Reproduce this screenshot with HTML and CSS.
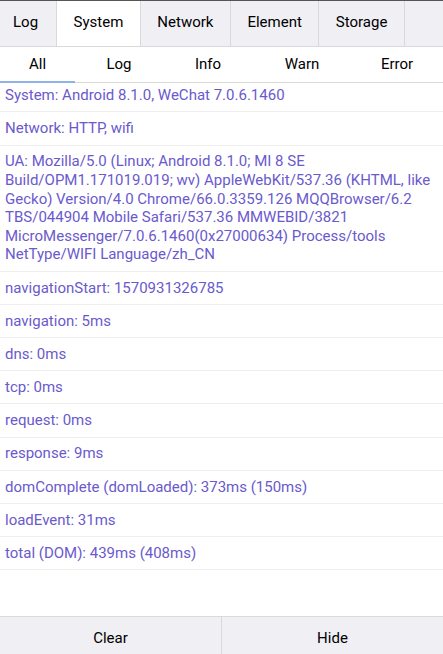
FILE: index.html
```html
<!DOCTYPE html>
<html>
<head>
<meta charset="utf-8">
<link rel="stylesheet" href="styles.css">
</head>
<body>
<div class="panel">
  <div class="tabbar">
    <div class="tab first">Log</div>
    <div class="tab active">System</div>
    <div class="tab">Network</div>
    <div class="tab">Element</div>
    <div class="tab">Storage</div>
  </div>
  <div class="subbar">
    <div class="sub active">All</div>
    <div class="sub">Log</div>
    <div class="sub">Info</div>
    <div class="sub">Warn</div>
    <div class="sub">Error</div>
  </div>
  <div class="content">
    <div class="row first">System: Android 8.1.0, WeChat 7.0.6.1460</div>
    <div class="row">Network: HTTP, wifi</div>
    <div class="row">UA: Mozilla/5.0 (Linux; Android 8.1.0; MI 8 SE Build/OPM1.171019.019; wv) AppleWebKit/537.36 (KHTML, like Gecko) Version/4.0 Chrome/66.0.3359.126 MQQBrowser/6.2 TBS/044904 Mobile Safari/537.36 MMWEBID/3821 MicroMessenger/7.0.6.1460(0x27000634) Process/tools NetType/WIFI Language/zh_CN</div>
    <div class="row">navigationStart: 1570931326785</div>
    <div class="row">navigation: 5ms</div>
    <div class="row">dns: 0ms</div>
    <div class="row">tcp: 0ms</div>
    <div class="row">request: 0ms</div>
    <div class="row">response: 9ms</div>
    <div class="row">domComplete (domLoaded): 373ms (150ms)</div>
    <div class="row">loadEvent: 31ms</div>
    <div class="row">total (DOM): 439ms (408ms)</div>
  </div>
  <div class="footer">
    <div class="btn">Clear</div>
    <div class="btn">Hide</div>
  </div>
</div>
</body>
</html>
```
FILE: styles.css
```css
html, body {
  margin: 0;
  padding: 0;
  height: 100%;
}
body {
  font-family: Roboto, "Liberation Sans", Arial, sans-serif;
  background: #ffffff;
  color: #000;
}
.panel {
  display: flex;
  flex-direction: column;
  height: 654px;
  border-top: 1px solid #555;
  box-sizing: border-box;
}
.tabbar {
  display: flex;
  height: 45px;
  background: #efeff4;
  border-bottom: 1px solid #d9d9d9;
  flex-shrink: 0;
}
.tab {
  padding: 0 16.5px;
  line-height: 43px;
  font-size: 15px;
  color: #000;
  border-right: 1px solid #d9d9d9;
}
.tab.first {
  padding-left: 13px;
  padding-right: 18px;
}
.tab.active {
  background: #fff;
}
.subbar {
  display: grid;
  grid-template-columns: 75px 88px 90px 98px 1fr;
  height: 35px;
  border-bottom: 1px solid #d9d9d9;
  flex-shrink: 0;
}
.sub {
  text-align: center;
  font-size: 15px;
  line-height: 34px;
  color: #000;
  border-bottom: 2px solid transparent;
  box-sizing: border-box;
}
.sub.active {
  border-bottom-color: #8fb3e6;
}
.content {
  flex: 1;
  overflow: hidden;
}
.row {
  padding: 6.8px 4px 6.8px 5px;
  font-size: 15px;
  line-height: 18.6px;
  color: #6a5acd;
  border-bottom: 1px solid #eeeeee;
}
.row.first {
  padding-top: 3px;
}
.footer {
  display: flex;
  height: 37px;
  background: #efeff4;
  border-top: 1px solid #d9d9d9;
  flex-shrink: 0;
  overflow: hidden;
}
.btn {
  flex: 1;
  text-align: center;
  font-size: 15px;
  line-height: 43px;
  color: #000;
}
.btn + .btn {
  border-left: 1px solid #d9d9d9;
}
```
